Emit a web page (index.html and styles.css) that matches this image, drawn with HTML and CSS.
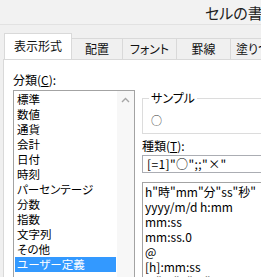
FILE: index.html
```html
<!DOCTYPE html>
<html lang="ja">
<head>
<meta charset="utf-8">
<link rel="stylesheet" href="styles.css">
</head>
<body>
<div class="window">
  <div class="titlebar"><span class="title">セルの書式設定</span></div>
  <div class="tabs">
    <div class="tab active">表示形式</div>
    <div class="tab w51">配置</div>
    <div class="tab w54">フォント</div>
    <div class="tab w54">罫線</div>
    <div class="tab last">塗りつぶし</div>
  </div>
  <div class="panel">
    <div class="left">
      <div class="label">分類(<u>C</u>):</div>
      <div class="catlist">
        <ul class="items">
          <li>標準</li>
          <li>数値</li>
          <li>通貨</li>
          <li>会計</li>
          <li>日付</li>
          <li>時刻</li>
          <li>パーセンテージ</li>
          <li>分数</li>
          <li>指数</li>
          <li>文字列</li>
          <li>その他</li>
          <li class="selected">ユーザー定義</li>
        </ul>
        <div class="scrollbar">
          <svg class="arrow" width="9" height="6" viewBox="0 0 9 6"><path d="M1 5 L4.5 1.5 L8 5" fill="none" stroke="#a6a6a6" stroke-width="1.4"/></svg>
        </div>
      </div>
    </div>
    <div class="right">
      <div class="group">
        <span class="legend">サンプル</span>
        <div class="sample">○</div>
      </div>
      <div class="label">種類(<u>T</u>):</div>
      <div class="input">[=1]"○";;"×"</div>
      <ul class="fmtlist">
        <li>h"時"mm"分"ss"秒"</li>
        <li>yyyy/m/d h:mm</li>
        <li>mm:ss</li>
        <li>mm:ss.0</li>
        <li>@</li>
        <li>[h]:mm:ss</li>
        <li>m"月"d"日"(aaa)</li>
      </ul>
    </div>
  </div>
</div>
</body>
</html>
```
FILE: styles.css
```css
html, body {
  margin: 0;
  padding: 0;
}
body {
  width: 261px;
  height: 277px;
  overflow: hidden;
  background: #f0f0f0;
  font-family: "Noto Sans CJK JP", "Noto Sans", sans-serif;
  font-feature-settings: "palt";
  color: #000;
}
.window {
  width: 261px;
  height: 277px;
  display: flex;
  flex-direction: column;
}
.titlebar {
  flex: none;
  height: 25px;
  box-sizing: border-box;
  border-bottom: 1px solid #e2e2e2;
  background: #f2f2f2;
  padding-left: 205px;
  white-space: nowrap;
  overflow: hidden;
  font-size: 15px;
  line-height: 26px;
  color: #222;
}
.tabs {
  flex: none;
  display: flex;
  align-items: flex-end;
  margin-top: 8px;
  padding-left: 4px;
  height: 26px;
  position: relative;
  z-index: 2;
  font-size: 12px;
  white-space: nowrap;
  overflow: hidden;
}
.tab {
  box-sizing: border-box;
  height: 21px;
  line-height: 19px;
  text-align: center;
  background: #f0f0f0;
  border: 1px solid #d9d9d9;
  border-left: none;
  border-bottom: none;
  color: #111;
  flex: none;
}
.tab.active {
  width: 68px;
  height: 27px;
  margin-bottom: -1px;
  background: #fff;
  border-left: 1px solid #d9d9d9;
  line-height: 24px;
}
.w51 { width: 51px; }
.w54 { width: 54px; }
.tab.last {
  padding: 0 6px 0 5px;
  text-align: left;
}
.panel {
  flex: 1;
  min-height: 0;
  margin-left: 3px;
  background: #fff;
  border-top: 1px solid #d9d9d9;
  border-left: 1px solid #d9d9d9;
  display: flex;
  padding: 12px 0 0 9px;
  font-size: 11.5px;
  overflow: hidden;
}
.label {
  flex: none;
  font-size: 12px;
  line-height: 15px;
  height: 15px;
}
.left {
  width: 122px;
  flex: none;
  display: flex;
  flex-direction: column;
}
.catlist {
  margin-top: 3px;
  flex: 1;
  min-height: 0;
  border: 1px solid #a3a3a3;
  border-bottom: none;
  display: flex;
  overflow: hidden;
}
.items {
  list-style: none;
  margin: 0;
  padding: 1px;
  flex: 1;
}
.items li {
  height: 15px;
  line-height: 15px;
  padding-left: 2px;
  white-space: nowrap;
}
.items li.selected {
  background: #3399ff;
  color: #fff;
}
.scrollbar {
  width: 17px;
  flex: none;
  background: #f7f7f7;
  display: flex;
  justify-content: center;
  padding-top: 6px;
  align-items: flex-start;
}
.right {
  margin-left: 7px;
  width: 160px;
  flex: none;
  display: flex;
  flex-direction: column;
  padding-top: 26px;
}
.group {
  flex: none;
  box-sizing: border-box;
  border: 1px solid #dcdcdc;
  height: 36px;
  padding-left: 6px;
  display: flex;
  flex-direction: column;
  align-items: flex-start;
}
.legend {
  flex: none;
  background: #fff;
  font-size: 12px;
  line-height: 15px;
  height: 15px;
  margin-top: -9px;
  padding: 0 2px;
}
.sample {
  flex: none;
  font-size: 11px;
  line-height: 14px;
  height: 14px;
  margin-top: 8px;
  margin-left: 2px;
  color: #333;
}
.right .label {
  margin-top: 4px;
}
.input {
  flex: none;
  margin-top: 2px;
  height: 18px;
  box-sizing: border-box;
  border: 1px solid #abadb3;
  padding-left: 4px;
  line-height: 16px;
  white-space: nowrap;
  font-size: 12px;
  letter-spacing: 0.4px;
}
.fmtlist {
  list-style: none;
  margin: 9px 0 0 0;
  padding: 1px 0 0 2px;
  flex: 1;
  min-height: 0;
  overflow: hidden;
  border: 1px solid #a3a3a3;
  border-bottom: none;
  font-size: 12px;
}
.fmtlist li {
  height: 15px;
  line-height: 15px;
  white-space: nowrap;
}
```
